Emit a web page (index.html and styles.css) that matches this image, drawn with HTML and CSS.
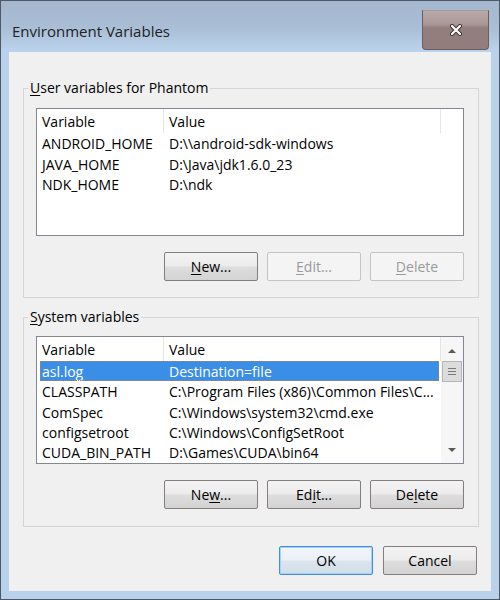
FILE: index.html
```html
<!DOCTYPE html>
<html lang="en">
<head>
<meta charset="utf-8">
<title>Environment Variables</title>
<link rel="stylesheet" href="styles.css">
</head>
<body>
<div class="window">
  <div class="titlebar">
    <span class="title">Environment Variables</span>
    <div class="close">
      <svg width="14" height="12" viewBox="0 0 14 12">
        <path d="M3 2 L11 10 M11 2 L3 10" stroke="#3a2e2e" stroke-width="4" stroke-linecap="round"/>
        <path d="M3 2 L11 10 M11 2 L3 10" stroke="#ffffff" stroke-width="2.2" stroke-linecap="round"/>
      </svg>
    </div>
  </div>
  <div class="client">
    <fieldset class="group">
      <legend><u>U</u>ser variables for Phantom</legend>
      <div class="group-body">
        <div class="list">
          <div class="list-main">
            <div class="list-head">
              <span class="hcell c1">Variable</span>
              <span class="hcell c2">Value</span>
            </div>
            <div class="row"><span class="c1">ANDROID_HOME</span><span class="c2">D:\\android-sdk-windows</span></div>
            <div class="row"><span class="c1">JAVA_HOME</span><span class="c2">D:\Java\jdk1.6.0_23</span></div>
            <div class="row"><span class="c1">NDK_HOME</span><span class="c2">D:\ndk</span></div>
          </div>
          <div class="list-pad"></div>
        </div>
        <div class="buttons">
          <button class="btn"><u>N</u>ew...</button>
          <button class="btn disabled"><u>E</u>dit...</button>
          <button class="btn disabled"><u>D</u>elete</button>
        </div>
      </div>
    </fieldset>
    <fieldset class="group group-sys">
      <legend><u>S</u>ystem variables</legend>
      <div class="group-body">
        <div class="list">
          <div class="list-main">
            <div class="list-head">
              <span class="hcell c1">Variable</span>
              <span class="hcell c2">Value</span>
            </div>
            <div class="row selected"><span class="c1">asl.log</span><span class="c2">Destination=file</span></div>
            <div class="row"><span class="c1">CLASSPATH</span><span class="c2">C:\Program Files (x86)\Common Files\C...</span></div>
            <div class="row"><span class="c1">ComSpec</span><span class="c2">C:\Windows\system32\cmd.exe</span></div>
            <div class="row"><span class="c1">configsetroot</span><span class="c2">C:\Windows\ConfigSetRoot</span></div>
            <div class="row"><span class="c1">CUDA_BIN_PATH</span><span class="c2">D:\Games\CUDA\bin64</span></div>
          </div>
          <div class="scrollbar">
            <div class="sb-btn"><span class="arrow-up"></span></div>
            <div class="sb-track"><div class="sb-thumb"><span></span><span></span><span></span></div></div>
            <div class="sb-btn"><span class="arrow-down"></span></div>
          </div>
        </div>
        <div class="buttons">
          <button class="btn">Ne<u>w</u>...</button>
          <button class="btn">Ed<u>i</u>t...</button>
          <button class="btn">De<u>l</u>ete</button>
        </div>
      </div>
    </fieldset>
    <div class="dialog-buttons">
      <button class="btn default">OK</button>
      <button class="btn">Cancel</button>
    </div>
  </div>
</div>
</body>
</html>
```

FILE: styles.css
```css
* { box-sizing: border-box; }
html, body { margin: 0; padding: 0; }
body {
  width: 500px;
  height: 600px;
  overflow: hidden;
  font-family: "Open Sans", "Noto Sans", sans-serif;
  font-size: 14px;
  color: #000;
}
.window {
  width: 500px;
  height: 600px;
  border: 1px solid #4d5866;
  background: #b9d1ea;
  display: flex;
  flex-direction: column;
}
.titlebar {
  height: 51px;
  flex: none;
  display: flex;
  justify-content: space-between;
  align-items: flex-start;
  background: linear-gradient(#a4b7ce 0%, #a9bdd5 50%, #b9d1ea 95%);
}
.title {
  margin: 20px 0 0 11px;
  font-size: 15px;
  line-height: 20px;
  color: #222;
}
.close {
  width: 67px;
  height: 40px;
  margin: 9px 10px 0 0;
  background: linear-gradient(#b9aaa9 0%, #a99796 35%, #927e7c 45%, #917d7b 100%);
  border: 1px solid #6c5c5b;
  border-top-color: #a89a99;
  border-radius: 0 0 4px 4px;
  display: flex;
  align-items: center;
  justify-content: center;
}
.client {
  margin: 0 8px;
  height: 539px;
  flex: none;
  background: #f0f0f0;
  padding: 28px 12px 0 14px;
}
.group {
  margin: 0;
  padding: 0;
  min-width: 0;
  border: 1px solid #d5d5d5;
}
.group-sys { margin-top: 11px; }
.group legend {
  margin-left: 4px;
  padding: 0 2px;
  line-height: 16px;
}
.group-body { padding: 12px 14px 16px 12px; }
.group-sys .group-body { padding-top: 11px; padding-bottom: 17px; }
.list {
  height: 128px;
  border: 1px solid #828790;
  background: #fff;
  display: flex;
}
.list-main {
  width: 404px;
  flex: none;
  display: flex;
  flex-direction: column;
}
.list-pad { flex: 1; }
.list-head {
  height: 24px;
  display: flex;
  align-items: stretch;
  flex: none;
}
.hcell {
  display: flex;
  align-items: center;
  border-right: 1px solid #e5e5e5;
  color: #000;
}
.list-head .c1 { width: 127px; padding-left: 5px; }
.list-head .c2 { width: 277px; padding-left: 5px; }
.row {
  height: 20.75px;
  display: flex;
  align-items: center;
  margin: 0 2px 0 3px;
  white-space: nowrap;
}
.row .c1 { width: 124px; padding-left: 2px; flex: none; }
.row .c2 { flex: 1; padding-left: 5px; overflow: hidden; }
.row.selected {
  background: #3b8ee6;
  color: #fff;
  outline: 1px dotted #b8804a;
  outline-offset: -1px;
}
.scrollbar {
  flex: 1;
  display: flex;
  flex-direction: column;
  background: #f6f6f6;
}
.sb-btn {
  height: 24px;
  flex: none;
  display: flex;
  align-items: center;
  justify-content: center;
}
.arrow-up, .arrow-down {
  width: 0;
  height: 0;
  border-left: 4px solid transparent;
  border-right: 4px solid transparent;
}
.arrow-up { border-bottom: 4px solid #5a5a5a; margin-top: 3px; }
.arrow-down { border-top: 4px solid #5a5a5a; margin-bottom: 2px; }
.sb-track { flex: 1; padding: 0 1px; }
.sb-thumb {
  height: 21px;
  background: #dcdcdc;
  border: 1px solid #b5b5b5;
  display: flex;
  flex-direction: column;
  align-items: center;
  justify-content: center;
  gap: 2px;
}
.sb-thumb span {
  width: 8px;
  height: 1px;
  background: #7a7a7a;
}
.buttons {
  margin-top: 16px;
  display: flex;
  justify-content: flex-end;
  gap: 9px;
}
.btn {
  width: 94px;
  height: 29px;
  padding: 0;
  font-family: inherit;
  font-size: 14px;
  color: #000;
  border: 1px solid #857c7c;
  border-radius: 2px;
  background: linear-gradient(#f3f3f3 0%, #ececec 48%, #dddddd 52%, #d3d3d3 100%);
}
.btn.disabled {
  color: #9a9a9a;
  border-color: #c4c4c4;
  background: #f4f4f4;
}
.btn.default {
  border-color: #3d8ee6;
  box-shadow: inset 0 0 0 1px #a8d2f4;
  background: linear-gradient(#f3f6fa 0%, #eaf0f6 48%, #dce5ee 52%, #d2dde8 100%);
}
.dialog-buttons {
  margin-top: 19px;
  padding-right: 2px;
  display: flex;
  justify-content: flex-end;
  gap: 10px;
}
u { text-decoration-thickness: 1px; text-underline-offset: 2px; }
```
